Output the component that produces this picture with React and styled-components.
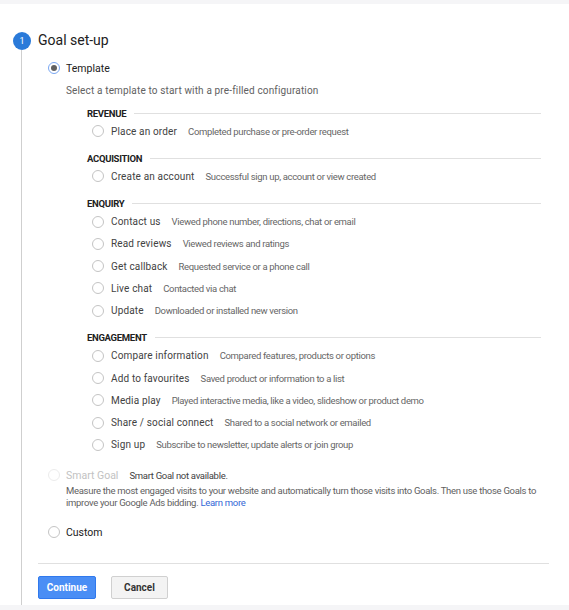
import styled, { createGlobalStyle } from 'styled-components';

const GlobalStyle = createGlobalStyle`
  body {
    margin: 0;
    background: #ffffff;
    font-family: Roboto, "Noto Sans", Arial, sans-serif;
  }
`;

const Page = styled.div`
  width: 569px;
  height: 610px;
  display: flex;
  flex-direction: column;
  overflow: hidden;
  background: #fff;
`;

const Band = styled.div`
  height: ${p => p.h}px;
  flex: none;
  background: #f5f5f7;
`;

const Step = styled.div`
  flex: 1;
  display: flex;
  margin-top: 28px;
  min-height: 0;
`;

const Rail = styled.div`
  width: 18px;
  margin: 0 7px 0 13px;
  display: flex;
  flex-direction: column;
  align-items: center;
`;

const StepNum = styled.div`
  width: 18px;
  height: 18px;
  border-radius: 50%;
  background: #2a7ad9;
  color: #fff;
  font-size: 9px;
  display: flex;
  align-items: center;
  justify-content: center;
  flex: none;
`;

const RailLine = styled.div`
  flex: 1;
  width: 1px;
  margin-left: -1px;
  background: #cfcfcf;
`;

const Body = styled.div`
  flex: 1;
  display: flex;
  flex-direction: column;
  padding-right: 20px;
`;

const Title = styled.div`
  font-size: 14px;
  line-height: 17px;
  color: #212121;
`;

const OptionRow = styled.label`
  display: flex;
  align-items: center;
  height: 16px;
  margin-left: 10px;
  margin-top: ${p => p.mt || 0}px;
  gap: 6px;
  font-size: 10.5px;
  color: ${p => (p.disabled ? '#c2c2c2' : '#212121')};
`;

const Radio = styled.span`
  width: 12px;
  height: 12px;
  box-sizing: border-box;
  border-radius: 50%;
  flex: none;
  background: #fff;
  border: 1px solid ${p => (p.checked ? '#7aa7f2' : p.disabled ? '#ececec' : '#c4c4c4')};
  display: flex;
  align-items: center;
  justify-content: center;
  &::after {
    content: '';
    display: ${p => (p.checked ? 'block' : 'none')};
    width: 6px;
    height: 6px;
    border-radius: 50%;
    background: #616161;
  }
`;

const Hint = styled.div`
  margin-left: 28px;
  margin-top: ${p => p.mt || 0}px;
  font-size: ${p => (p.tight ? '9.5px' : '10px')};
  line-height: 12px;
  letter-spacing: ${p => (p.tight ? '-0.3px' : '0.15px')};
  color: #616161;
`;

const SmartNote = styled.span`
  margin-left: 5px;
  font-size: 9.5px;
  color: #424242;
  letter-spacing: -0.3px;
`;

const Link = styled.a`
  color: #3367d6;
  text-decoration: none;
`;

const Categories = styled.div`
  margin: 9px 8px 0 49px;
  display: flex;
  flex-direction: column;
  gap: 9px;
`;

const Group = styled.div`
  display: flex;
  flex-direction: column;
`;

const GroupHead = styled.div`
  display: flex;
  align-items: center;
  gap: 8px;
  height: 14px;
  font-size: 9.5px;
  font-weight: bold;
  letter-spacing: -0.3px;
  color: #212121;
  &::after {
    content: '';
    flex: 1;
    height: 1px;
    background: #e0e0e0;
  }
`;

const Item = styled.label`
  display: flex;
  align-items: center;
  height: 22.25px;
  padding-left: 5px;
  gap: 7px;
`;

const ItemName = styled.span`
  font-size: 10px;
  letter-spacing: 0.15px;
  color: #424242;
`;

const ItemDesc = styled.span`
  margin-left: 4px;
  font-size: 9.5px;
  letter-spacing: -0.33px;
  color: #666;
`;

const Divider = styled.div`
  height: 1px;
  background: #e0e0e0;
  margin-top: 23px;
`;

const Buttons = styled.div`
  display: flex;
  gap: 15px;
  margin-top: 12px;
`;

const Button = styled.button`
  width: ${p => p.w}px;
  height: 23px;
  box-sizing: border-box;
  border-radius: 2px;
  font-family: inherit;
  font-size: 10px;
  font-weight: bold;
  padding: 0;
  border: 1px solid ${p => (p.primary ? '#3079ed' : '#d0d0d0')};
  background: ${p => (p.primary ? '#4a8ef5' : '#f3f3f3')};
  color: ${p => (p.primary ? '#fff' : '#333')};
`;

const groups = [
  { name: 'REVENUE', items: [['Place an order', 'Completed purchase or pre-order request']] },
  { name: 'ACQUISITION', items: [['Create an account', 'Successful sign up, account or view created']] },
  {
    name: 'ENQUIRY',
    items: [
      ['Contact us', 'Viewed phone number, directions, chat or email'],
      ['Read reviews', 'Viewed reviews and ratings'],
      ['Get callback', 'Requested service or a phone call'],
      ['Live chat', 'Contacted via chat'],
      ['Update', 'Downloaded or installed new version'],
    ],
  },
  {
    name: 'ENGAGEMENT',
    items: [
      ['Compare information', 'Compared features, products or options'],
      ['Add to favourites', 'Saved product or information to a list'],
      ['Media play', 'Played interactive media, like a video, slideshow or product demo'],
      ['Share / social connect', 'Shared to a social network or emailed'],
      ['Sign up', 'Subscribe to newsletter, update alerts or join group'],
    ],
  },
];

export default function App() {
  return (
    <Page>
      <GlobalStyle />
      <Band h={4} />
      <Step>
        <Rail>
          <StepNum>1</StepNum>
          <RailLine />
        </Rail>
        <Body>
          <Title>Goal set-up</Title>
          <OptionRow mt={11}>
            <Radio checked />
            Template
          </OptionRow>
          <Hint mt={9}>Select a template to start with a pre-filled configuration</Hint>
          <Categories>
            {groups.map(g => (
              <Group key={g.name}>
                <GroupHead>{g.name}</GroupHead>
                {g.items.map(([name, desc]) => (
                  <Item key={name}>
                    <Radio />
                    <ItemName>{name}</ItemName>
                    <ItemDesc>{desc}</ItemDesc>
                  </Item>
                ))}
              </Group>
            ))}
          </Categories>
          <OptionRow mt={11} disabled>
            <Radio disabled />
            Smart Goal
            <SmartNote>Smart Goal not available.</SmartNote>
          </OptionRow>
          <Hint mt={2} tight>
            Measure the most engaged visits to your website and automatically turn those visits into Goals. Then use those Goals to improve your Google Ads bidding. <Link href="#">Learn more</Link>
          </Hint>
          <OptionRow mt={15}>
            <Radio />
            Custom
          </OptionRow>
          <Divider />
          <Buttons>
            <Button primary w={58}>Continue</Button>
            <Button w={57}>Cancel</Button>
          </Buttons>
        </Body>
      </Step>
      <Band h={5} />
    </Page>
  );
}
